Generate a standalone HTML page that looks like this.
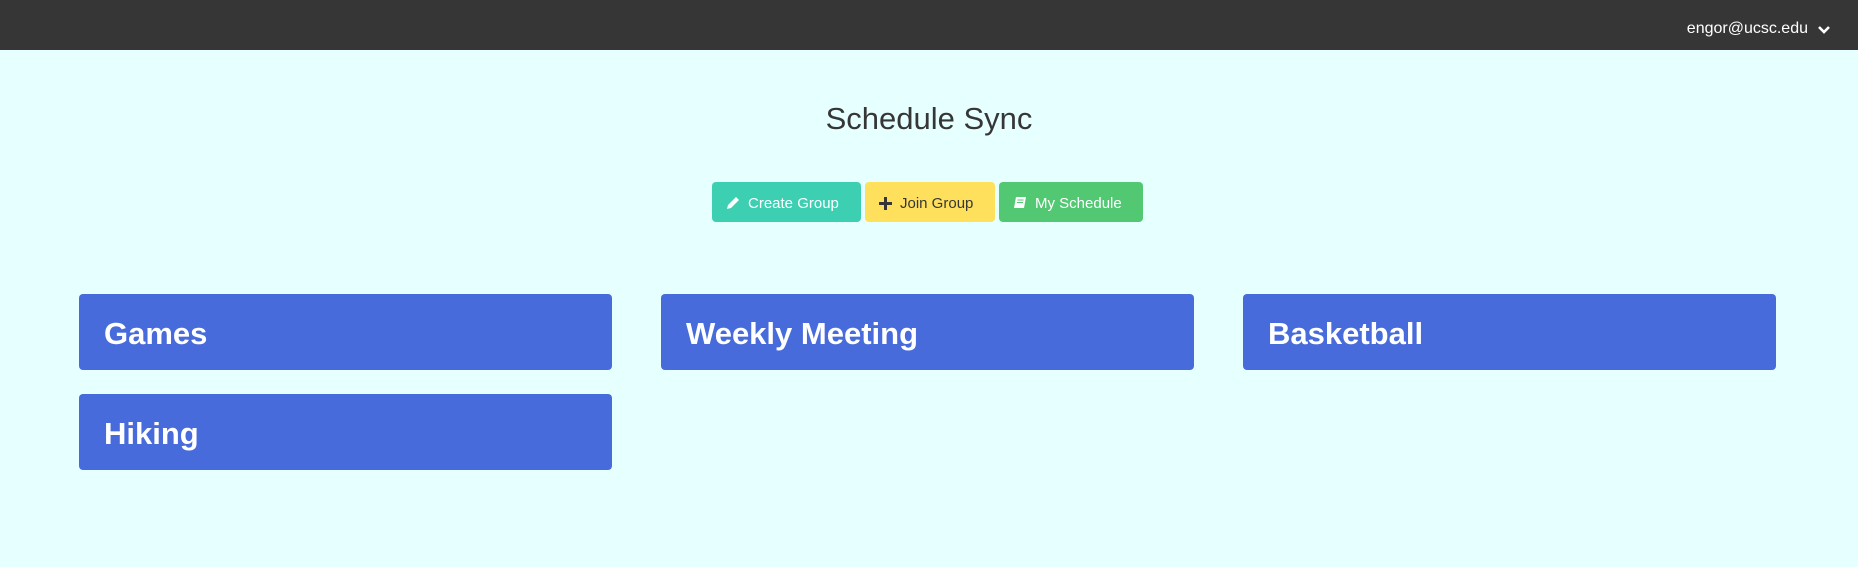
<!DOCTYPE html>
<html><head><style>
*{margin:0;padding:0;box-sizing:border-box}
body{width:1858px;height:567px;background:#e6ffff;font-family:"Liberation Sans",sans-serif;overflow:hidden;position:relative}
.nav{height:50px;background:#363636;position:relative}
.email{position:absolute;right:50px;top:20px;color:#fff;font-size:16px}
.chev{position:absolute;right:27px;top:25px}
h1{position:absolute;left:0;width:1858px;top:101px;text-align:center;font-size:31px;font-weight:normal;color:#363636}
.btn{position:absolute;top:182px;height:40px;border-radius:4px;font-size:15px;line-height:43px;color:#fff;padding-left:14px}
.btn svg{vertical-align:-2px;margin-right:8px}
.card{position:absolute;width:533px;height:76px;background:#486bdc;border-radius:4px;color:#fff;font-weight:bold;font-size:31px;padding-left:25px;line-height:80px}
</style></head><body>
<div class="nav"><span class="email">engor@ucsc.edu</span>
<svg class="chev" width="14" height="10" viewBox="0 0 14 10"><path d="M2 2l5 5 5-5" stroke="#fff" stroke-width="2.6" fill="none"/></svg></div>
<h1>Schedule Sync</h1>
<div class="btn" style="left:712px;width:149px;background:#3ccfb2"><svg width="14" height="14" viewBox="0 0 14 14"><path d="M1 13l1-4 8-8 3 3-8 8z" fill="#fff"/></svg>Create Group</div>
<div class="btn" style="left:865px;width:130px;background:#ffe05d;color:#363636"><svg width="13" height="13" viewBox="0 0 13 13"><path d="M5 0h3v5h5v3H8v5H5V8H0V5h5z" fill="#363636"/></svg>Join Group</div>
<div class="btn" style="left:999px;width:144px;background:#52c873"><svg width="14" height="14" viewBox="0 0 14 14"><path d="M3 1h10l-2 11H1z" fill="#fff"/><path d="M4.5 4h6M4 6.5h6" stroke="#52c873" stroke-width="1"/></svg>My Schedule</div>
<div class="card" style="left:79px;top:294px">Games</div>
<div class="card" style="left:661px;top:294px">Weekly Meeting</div>
<div class="card" style="left:1243px;top:294px">Basketball</div>
<div class="card" style="left:79px;top:394px">Hiking</div>
</body></html>
